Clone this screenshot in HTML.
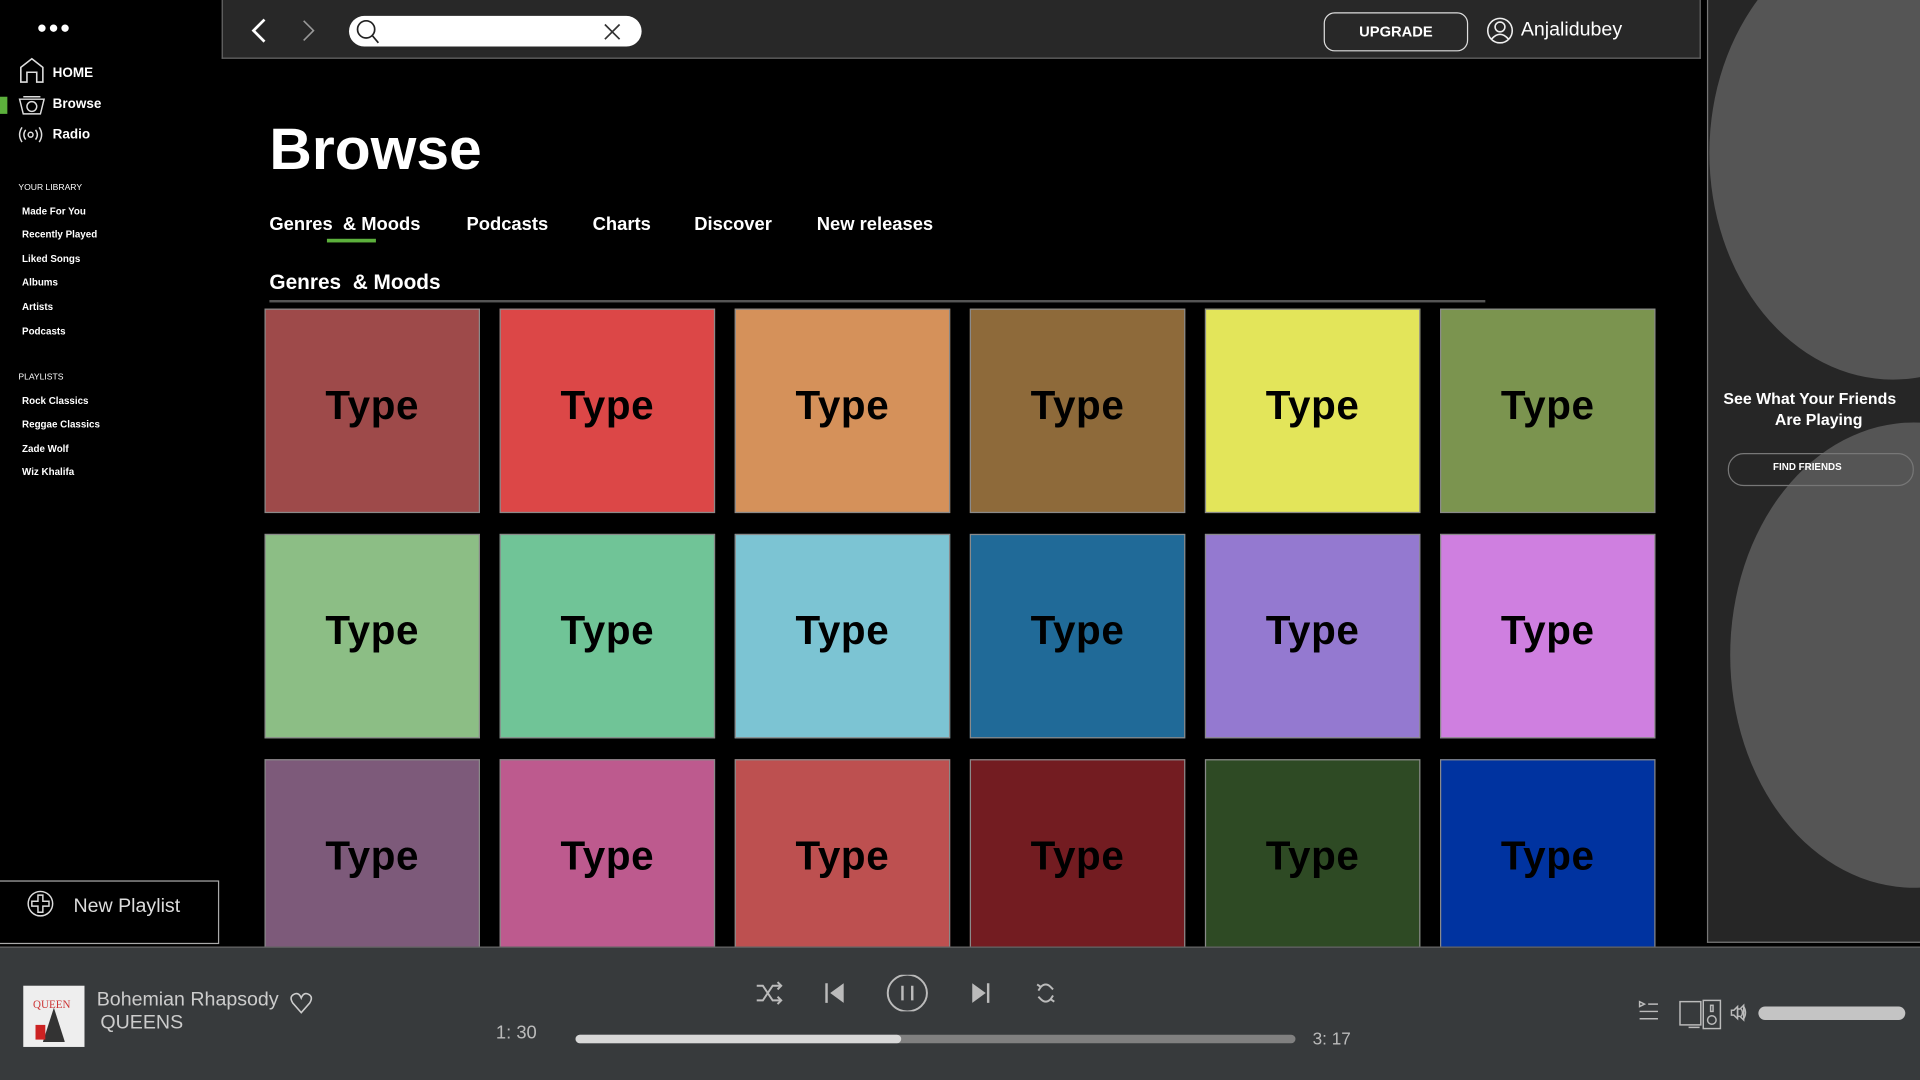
<!DOCTYPE html>
<html><head><meta charset="utf-8"><style>
html,body{margin:0;padding:0;width:1920px;height:1080px;overflow:hidden;background:#000;}
#w{position:absolute;left:0;top:0;width:1568px;height:882px;transform:scale(1.2244898);transform-origin:0 0;background:#000;font-family:"Liberation Sans",sans-serif;color:#fff;overflow:hidden;}
.a{position:absolute;}
.side{font-weight:bold;font-size:11px;}
.lib{font-size:8px;font-weight:bold;}
.tile{position:absolute;width:174px;height:165px;border:1px solid #8a8a8a;display:flex;align-items:center;justify-content:center;color:#000;font-weight:bold;font-size:33px;letter-spacing:0.5px;box-sizing:content-box;}
.tile span{position:relative;top:-5px}
.tab{position:absolute;top:175px;font-size:15px;font-weight:bold;}
</style></head><body><div id="w">
<div class="a" style="left:30px;top:14px;font-size:14px;letter-spacing:1px;font-weight:bold;">&#9679;&#9679;&#9679;</div>
<svg class="a" style="left:15px;top:46px" width="22" height="22" viewBox="0 0 22 22" fill="none" stroke="#ddd" stroke-width="1.3"><path d="M2 9 L11 2 L20 9 V21 H15 V13 H7 V21 H2 Z"/></svg>
<div class="a side" style="left:43px;top:54px">HOME</div>
<div class="a" style="left:0;top:79px;width:6px;height:14px;background:#5cb03c"></div>
<svg class="a" style="left:15px;top:77px" width="22" height="18" viewBox="0 0 22 18" fill="none" stroke="#ddd" stroke-width="1.2"><path d="M1 4 H21 L18 16 H4 Z"/><path d="M4 2 H18"/><circle cx="11" cy="10" r="4"/></svg>
<div class="a side" style="left:43px;top:79px">Browse</div>
<svg class="a" style="left:15px;top:102px" width="20" height="16" viewBox="0 0 20 16" fill="none" stroke="#ddd" stroke-width="1.2"><circle cx="10" cy="8" r="2"/><path d="M6 4 Q3 8 6 12 M14 4 Q17 8 14 12 M3 2 Q-1 8 3 14 M17 2 Q21 8 17 14"/></svg>
<div class="a side" style="left:43px;top:104px">Radio</div>
<div class="a lib" style="left:15px;top:150px;font-weight:normal;font-size:7px">YOUR LIBRARY</div>
<div class="a lib" style="left:18px;top:168px">Made For You</div>
<div class="a lib" style="left:18px;top:187px">Recently Played</div>
<div class="a lib" style="left:18px;top:207px">Liked Songs</div>
<div class="a lib" style="left:18px;top:226px">Albums</div>
<div class="a lib" style="left:18px;top:246px">Artists</div>
<div class="a lib" style="left:18px;top:266px">Podcasts</div>
<div class="a lib" style="left:15px;top:305px;font-weight:normal;font-size:7px">PLAYLISTS</div>
<div class="a lib" style="left:18px;top:323px">Rock Classics</div>
<div class="a lib" style="left:18px;top:342px">Reggae Classics</div>
<div class="a lib" style="left:18px;top:362px">Zade Wolf</div>
<div class="a lib" style="left:18px;top:381px">Wiz Khalifa</div>
<div class="a" style="left:-1px;top:719px;width:178px;height:50px;border:1px solid #aaa;"></div>
<svg class="a" style="left:22px;top:727px" width="22" height="22" viewBox="0 0 22 22" fill="none" stroke="#ddd" stroke-width="1.2"><circle cx="11" cy="11" r="10"/><path d="M9 4 H13 V9 H18 V13 H13 V18 H9 V13 H4 V9 H9 Z"/></svg>
<div class="a" style="left:60px;top:732px;font-size:16px;color:#ddd;">New Playlist</div>
<div class="a" style="left:181px;top:0;width:1206px;height:47px;background:#282828;border:1px solid #666;border-top:none"></div>
<svg class="a" style="left:202px;top:14px" width="60" height="22" viewBox="0 0 60 22" fill="none"><path d="M14 2 L5 11 L14 20" stroke="#fff" stroke-width="2.2"/><path d="M46 3 L54 11 L46 19" stroke="#999" stroke-width="1.3"/></svg>
<div class="a" style="left:285px;top:13px;width:239px;height:25px;background:#fff;border-radius:13px;"></div>
<svg class="a" style="left:289px;top:15px" width="22" height="22" viewBox="0 0 22 22" fill="none" stroke="#222" stroke-width="1.4"><circle cx="10" cy="9" r="7"/><path d="M15 14 L20 20"/></svg>
<svg class="a" style="left:492px;top:18px" width="16" height="16" viewBox="0 0 16 16" stroke="#333" stroke-width="1.4"><path d="M2 2 L14 14 M14 2 L2 14"/></svg>
<div class="a" style="left:1081px;top:10px;width:116px;height:30px;border:1px solid #ddd;border-radius:9px;text-align:center;line-height:30px;font-size:12px;font-weight:bold;">UPGRADE</div>
<svg class="a" style="left:1214px;top:14px" width="22" height="22" viewBox="0 0 22 22" fill="none" stroke="#eee" stroke-width="1.3"><circle cx="11" cy="11" r="10"/><circle cx="11" cy="8" r="4"/><path d="M4 18 Q11 10 18 18"/></svg>
<div class="a" style="left:1242px;top:16px;font-size:16px;">Anjalidubey</div>
<div class="a" style="left:220px;top:95px;font-size:48px;font-weight:bold;">Browse</div>
<div class="tab" style="left:220px">Genres &nbsp;&amp; Moods</div>
<div class="a" style="left:267px;top:195px;width:40px;height:3px;background:#5cb03c"></div>
<div class="tab" style="left:381px">Podcasts</div>
<div class="tab" style="left:484px">Charts</div>
<div class="tab" style="left:567px">Discover</div>
<div class="tab" style="left:667px">New releases</div>
<div class="a" style="left:220px;top:221px;font-size:17px;font-weight:bold">Genres &nbsp;&amp; Moods</div>
<div class="a" style="left:220px;top:245px;width:993px;height:2px;background:#555"></div>
<div class="tile" style="left:216px;top:252px;background:#9e4a4a"><span>Type</span></div>
<div class="tile" style="left:408px;top:252px;background:#dc4747"><span>Type</span></div>
<div class="tile" style="left:600px;top:252px;background:#d5915a"><span>Type</span></div>
<div class="tile" style="left:792px;top:252px;background:#8e6a3a"><span>Type</span></div>
<div class="tile" style="left:984px;top:252px;background:#e3e55a"><span>Type</span></div>
<div class="tile" style="left:1176px;top:252px;background:#7b944f"><span>Type</span></div>
<div class="tile" style="left:216px;top:436px;background:#8cbe85"><span>Type</span></div>
<div class="tile" style="left:408px;top:436px;background:#70c497"><span>Type</span></div>
<div class="tile" style="left:600px;top:436px;background:#7cc4d3"><span>Type</span></div>
<div class="tile" style="left:792px;top:436px;background:#206a98"><span>Type</span></div>
<div class="tile" style="left:984px;top:436px;background:#9479d0"><span>Type</span></div>
<div class="tile" style="left:1176px;top:436px;background:#cf7fe0"><span>Type</span></div>
<div class="tile" style="left:216px;top:620px;background:#7d5a7a"><span>Type</span></div>
<div class="tile" style="left:408px;top:620px;background:#bd5a8e"><span>Type</span></div>
<div class="tile" style="left:600px;top:620px;background:#bd5050"><span>Type</span></div>
<div class="tile" style="left:792px;top:620px;background:#731c21"><span>Type</span></div>
<div class="tile" style="left:984px;top:620px;background:#2e4a24"><span>Type</span></div>
<div class="tile" style="left:1176px;top:620px;background:#0033a0"><span>Type</span></div>
<div class="a" style="left:1394px;top:0;width:174px;height:769px;background:#262626;border-left:1px solid #777;border-bottom:1px solid #777;overflow:hidden">
<div class="a" style="left:1px;top:-60px;width:300px;height:370px;border-radius:50%;background:#555"></div>
<div class="a" style="left:18px;top:345px;width:300px;height:380px;border-radius:50%;background:#555"></div>
<div class="a" style="left:16px;top:370px;width:150px;height:25px;border:1px solid #777;border-radius:13px;"></div>
<div class="a" style="left:53px;top:377px;font-size:8px;font-weight:bold;">FIND FRIENDS</div>
<div class="a" style="left:0;top:317px;width:166px;text-align:center;font-size:13px;font-weight:bold;line-height:17px">See What Your Friends<br>&nbsp;&nbsp;&nbsp;&nbsp;Are Playing</div>
</div>
<div class="a" style="left:0;top:773px;width:1568px;height:109px;background:#373a3c;border-top:1px solid #666"></div>
<div class="a" style="left:19px;top:805px;width:50px;height:50px;background:#eee;overflow:hidden">
<div class="a" style="left:8px;top:10px;font-size:9px;color:#c33;font-family:'Liberation Serif',serif">QUEEN</div>
<div class="a" style="left:16px;top:18px;width:18px;height:28px;background:#333;clip-path:polygon(50% 0,100% 100%,0 100%)"></div>
<div class="a" style="left:10px;top:32px;width:8px;height:12px;background:#c22"></div>
</div>
<div class="a" style="left:79px;top:808px;font-size:16px;color:#ccc">Bohemian Rhapsody</div>
<svg class="a" style="left:236px;top:809px" width="20" height="20" viewBox="0 0 20 20" fill="none" stroke="#ccc" stroke-width="1.3"><path d="M10 18 L3 10 Q0 5 4 3 Q8 1 10 6 Q12 1 16 3 Q20 5 17 10 Z"/></svg>
<div class="a" style="left:82px;top:827px;font-size:16px;color:#ccc">QUEENS</div>
<div class="a" style="left:405px;top:835px;font-size:15px;color:#bbb">1: 30</div>
<div class="a" style="left:470px;top:845px;width:588px;height:7px;background:#808080;border-radius:4px"></div>
<div class="a" style="left:470px;top:845px;width:266px;height:7px;background:#d8d8d8;border-radius:4px"></div>
<div class="a" style="left:1072px;top:840px;font-size:14px;color:#bbb">3: 17</div>
<svg class="a" style="left:614px;top:796px" width="260" height="30" viewBox="0 0 260 30" fill="none" stroke="#bbb" stroke-width="1.6">
<path d="M4 9 H9 L17 21 H24 M4 21 H9 L17 9 H24 M21 6 L24 9 L21 12 M21 18 L24 21 L21 24"/>
<path d="M61 7 V23" stroke-width="2"/><path d="M75 7 L64 15 L75 23 Z" fill="#bbb" stroke="none"/>
<ellipse cx="127" cy="15" rx="16" ry="15"/><path d="M123 9 V21 M131 9 V21" stroke-width="2"/>
<path d="M180 7 L191 15 L180 23 Z" fill="#bbb" stroke="none"/><path d="M193 7 V23" stroke-width="2"/>
<path d="M236 10 Q240 6 244 10 L246 12 M233 8 L236 10 L234 13 M244 20 Q240 24 236 20 L234 18 M247 22 L244 20 L246 17"/>
</svg>
<svg class="a" style="left:1336px;top:813px" width="90" height="28" viewBox="0 0 90 28" fill="none" stroke="#bbb" stroke-width="1.2">
<path d="M3 5 L7 7 L3 9 Z M10 7 H18 M3 13 H18 M3 19 H18"/>
<rect x="36" y="5" width="17" height="19"/><path d="M43 26 H52"/><rect x="55" y="4" width="14" height="23"/><rect x="61" y="8" width="2" height="5"/><circle cx="62" cy="20" r="3.5"/>
<path d="M83 11 H85 L88 8 V20 L85 17 H83 Z"/>
</svg>
<svg class="a" style="left:1413px;top:820px" width="20" height="14" viewBox="0 0 20 14" fill="none" stroke="#bbb" stroke-width="1.2"><path d="M1 5 H3 L6 2 V12 L3 9 H1 Z M9 4 Q11 7 9 10 M11 2 Q14 7 11 12"/></svg>
<div class="a" style="left:1436px;top:822px;width:120px;height:11px;background:#c4c4c4;border-radius:6px"></div>
</div></body></html>
